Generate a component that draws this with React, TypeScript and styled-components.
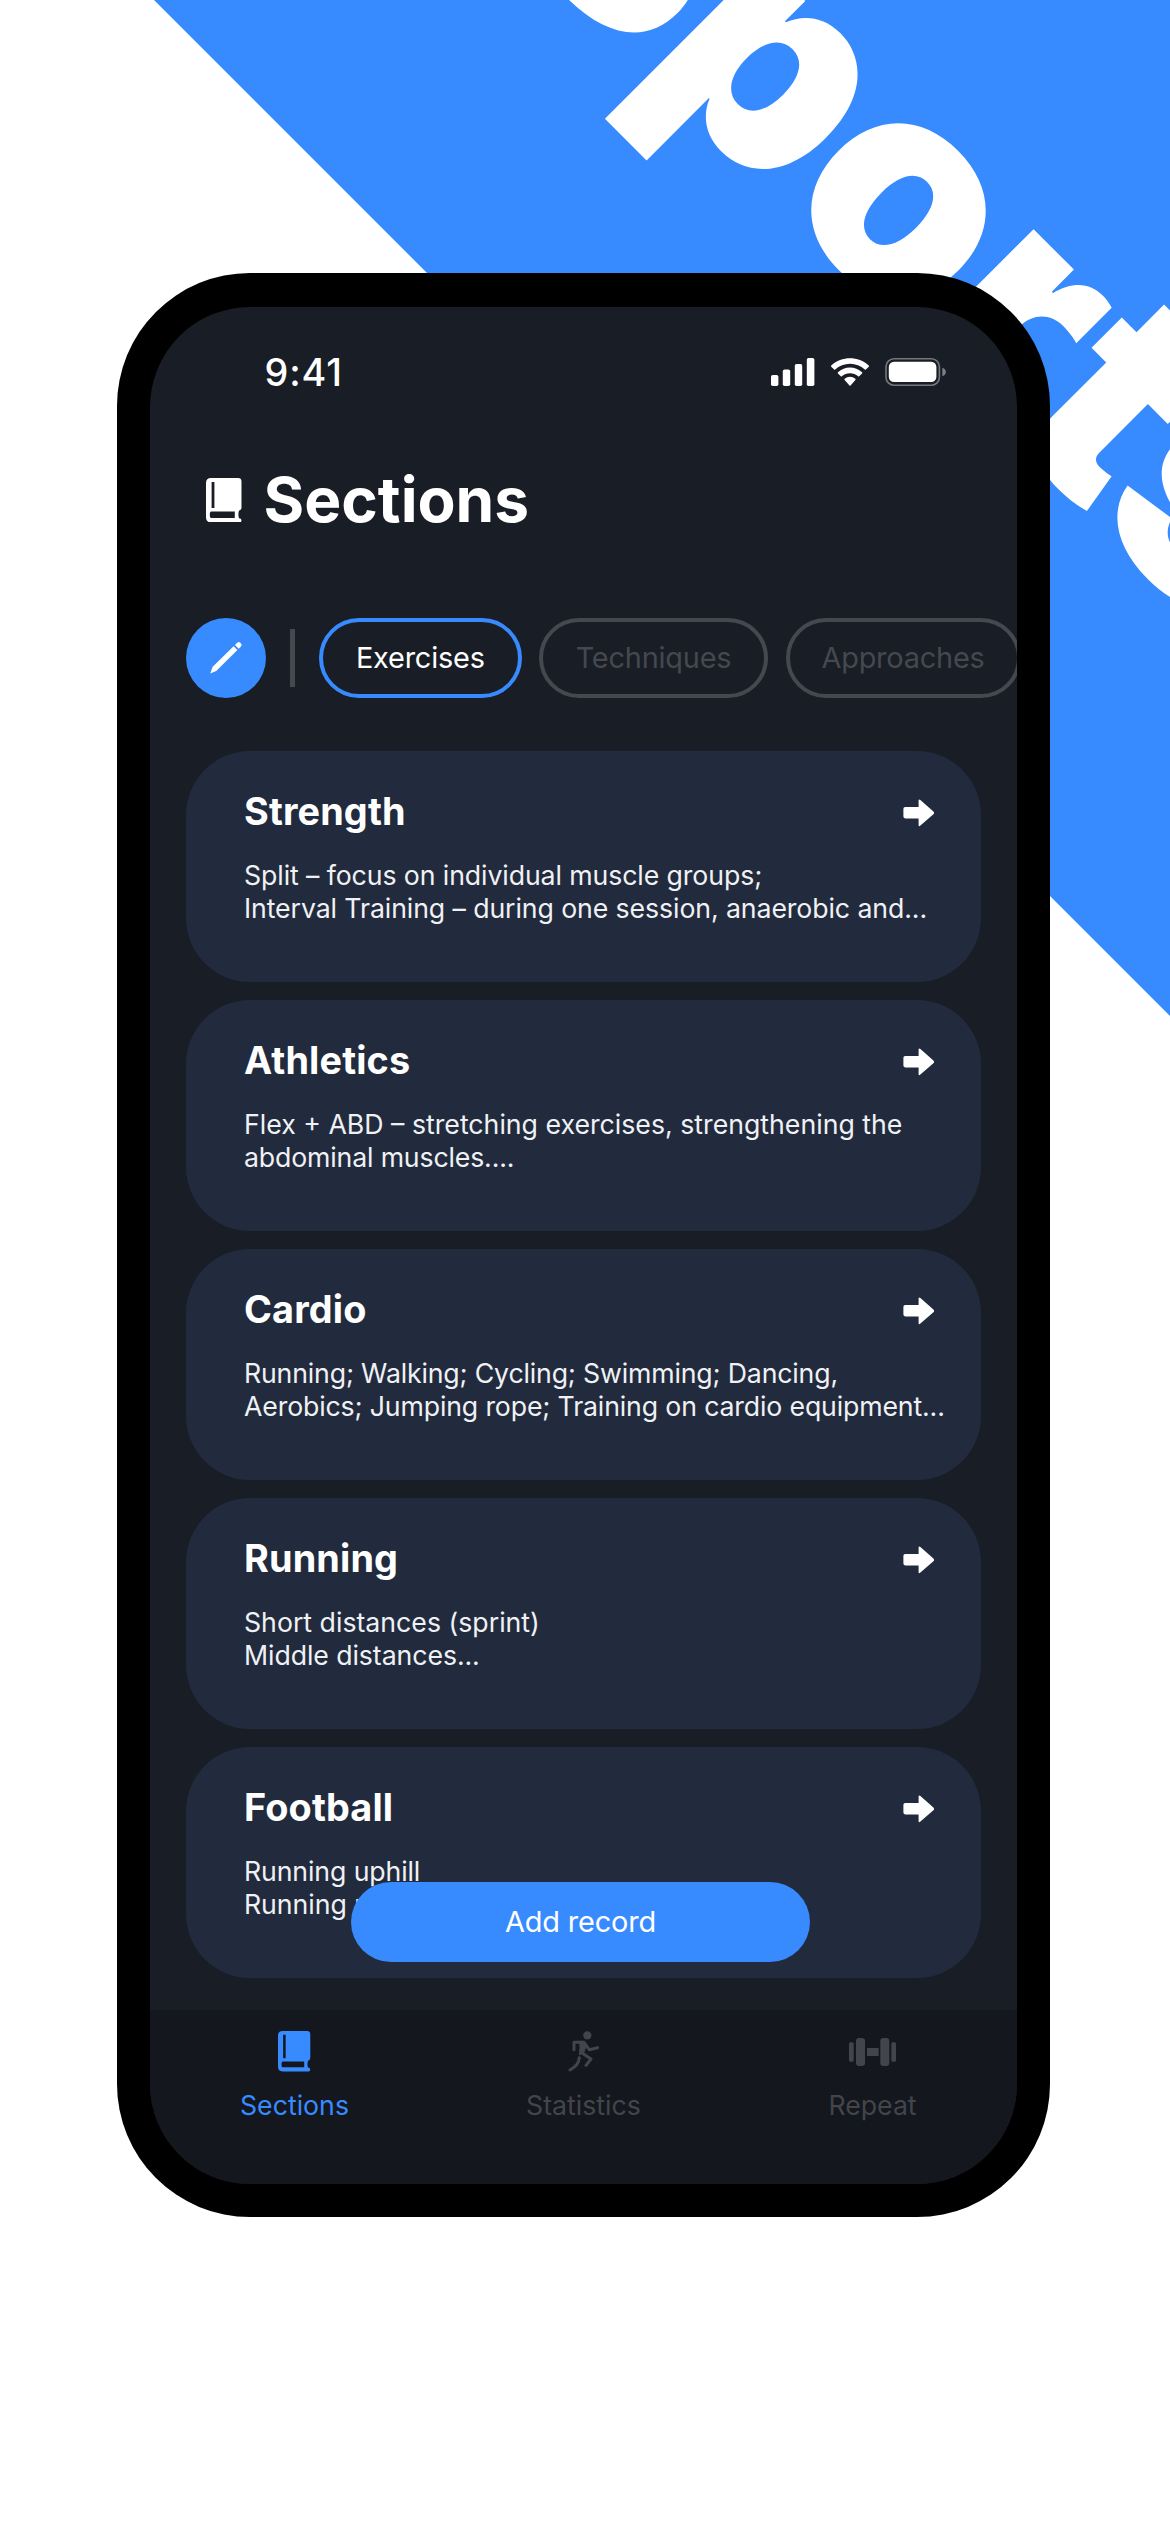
import React from "react";
import styled, { createGlobalStyle } from "styled-components";

const blue = "#388bff";
const muted = "#45484f";

const GlobalStyle = createGlobalStyle`
  * { box-sizing: border-box; margin: 0; }
  body { margin: 0; background: #fff; font-family: Inter, "Liberation Sans", sans-serif; }
  button { font: inherit; padding: 0; border: 0; background: none; color: inherit; }
`;

const Page = styled.main`
  position: relative;
  width: 1170px;
  height: 2532px;
  padding: 273px 120px 0 117px;
  overflow: hidden;
  background: #fff;
`;

const Banner = styled.div`
  position: absolute;
  inset: 0;
  background: ${blue};
  clip-path: polygon(154px 0, 100% 0, 100% 1016px);
`;

const BannerText = styled.span`
  position: absolute;
  left: 0;
  top: 0;
  font-size: 300px;
  line-height: 1;
  font-weight: 900;
  white-space: nowrap;
  color: #fff;
  transform-origin: 0 0;
  transform: rotate(45deg) translate(297px, -664px);
`;

const Phone = styled.section`
  position: relative;
  width: 933px;
  height: 1944px;
  padding: 33.5px 33px;
  border-radius: 133px;
  background: #000;
`;

const Screen = styled.div`
  position: relative;
  display: flex;
  flex-direction: column;
  width: 100%;
  height: 100%;
  border-radius: 100px;
  overflow: hidden;
  background: #191d25;
  color: #fff;
`;

const StatusBar = styled.div`
  display: flex;
  flex: none;
  align-items: center;
  justify-content: space-between;
  height: 130.5px;
  padding: 0 71px 0 114.5px;
`;

const Clock = styled.time`
  font-size: 37.8px;
  font-weight: 500;
  letter-spacing: 0.9px;
`;

const StatusIcons = styled.div`
  display: flex;
  align-items: center;
  gap: 16px;
`;

const Header = styled.header`
  display: flex;
  flex: none;
  align-items: center;
  gap: 22px;
  height: 125.5px;
  padding-left: 56px;
`;

const Title = styled.h1`
  font-size: 62.2px;
  line-height: 75px;
  font-weight: 700;
`;

const Chips = styled.div`
  display: flex;
  flex: none;
  align-items: center;
  gap: 17.7px;
  height: 80.3px;
  margin-top: 55px;
  padding-left: 36px;
`;

const EditButton = styled.button`
  display: grid;
  flex: none;
  place-items: center;
  width: 80.3px;
  height: 80.3px;
  border-radius: 50%;
  background: ${blue};
`;

const Divider = styled.span`
  flex: none;
  width: 5px;
  height: 58px;
  margin: 0 6.2px;
  background: ${muted};
`;

const Chip = styled.button<{ $width: number; $active?: boolean }>`
  flex: none;
  width: ${(p) => p.$width}px;
  height: 80.3px;
  border: 4.4px solid ${(p) => (p.$active ? blue : muted)};
  border-radius: 40.2px;
  font-size: 28.9px;
  letter-spacing: -0.2px;
  color: ${(p) => (p.$active ? "#fff" : muted)};
`;

const List = styled.div`
  display: flex;
  flex: 1;
  flex-direction: column;
  gap: 17.7px;
  min-height: 0;
  padding: 53.4px 36px 0;
`;

const Card = styled.article`
  flex: none;
  height: 231.3px;
  padding: 37px 46px 0 58px;
  border-radius: 64px;
  background: #212b3d;
`;

const CardHead = styled.div`
  display: flex;
  align-items: center;
  justify-content: space-between;
  height: 46px;

  svg {
    margin-top: 4px;
  }
`;

const CardTitle = styled.h2`
  font-size: 37.8px;
  line-height: 46px;
  font-weight: 700;
  letter-spacing: 0.15px;
`;

const CardText = styled.div`
  padding-top: 25px;
  font-size: 26.7px;
  line-height: 33.3px;
  color: #f0f1f4;
`;

const Line = styled.p<{ $tracking: number }>`
  white-space: nowrap;
  letter-spacing: ${(p) => p.$tracking}px;
`;

const AddButton = styled.button`
  position: absolute;
  left: 201px;
  bottom: 222px;
  width: 459px;
  height: 80px;
  border-radius: 40px;
  background: ${blue};
  font-size: 28.9px;
  letter-spacing: -0.15px;
  color: #fff;
`;

const TabBar = styled.nav`
  display: grid;
  flex: none;
  grid-template-columns: repeat(3, 1fr);
  height: 174px;
  background: #14171e;
`;

const Tab = styled.button<{ $active?: boolean }>`
  display: flex;
  flex-direction: column;
  align-items: center;
  padding-top: 17px;
  font-size: 26.7px;
  line-height: 34px;
  color: ${(p) => (p.$active ? blue : "#424549")};
`;

const TabIcon = styled.span`
  display: grid;
  place-items: center;
  height: 50px;
  margin-bottom: 11px;
`;

const Book = ({ width }: { width: number }) => (
  <svg width={width} height={width * 1.25} viewBox="0 0 35.5 44.4" fill="currentColor" fillRule="evenodd">
    <path d="M5 0H32Q35.5 0 35.5 3.5V29.5Q35.5 32 33 32.8Q31.8 36.5 33 40.2Q35.5 40.2 35.5 42.3Q35.5 44.4 33.5 44.4H5Q0 44.4 0 39V5Q0 0 5 0ZM7.2 4H5.6V30H8.4V4ZM5.2 33.6Q3.8 33.6 3.8 36.8Q3.8 40 5.2 40H28.8V33.6Z" />
  </svg>
);

const Arrow = () => (
  <svg width="32" height="28" viewBox="0 0 32 28" fill="#fff">
    <path d="M2.2 8H15.6V1.5Q15.6-.4 17.4 1L30.4 12.6Q31.8 14 30.4 15.3L17.4 26.6Q15.6 28 15.6 26V19.4H2.2Q.4 19.4.4 17.6V9.8Q.4 8 2.2 8Z" />
  </svg>
);

const Pencil = () => (
  <svg width="34" height="34" viewBox="0 0 34 34" fill="#fff">
    <path d="M1.3 32.4L3.5 26.1L24.6 5.2L28.4 9L7.2 29.9ZM25.9 3.9L28.3 1.7Q29.7.4 31.2 1.7L32 2.5Q33.4 4 32 5.4L29.7 7.7Z" />
  </svg>
);

const Runner = () => (
  <svg width="32" height="42" viewBox="0 0 96 126" fill="none" stroke="currentColor" strokeWidth="9" strokeLinejoin="round" strokeLinecap="round">
    <circle cx="58" cy="13" r="12.5" fill="currentColor" stroke="none" />
    <path d="M18 56V34H46" />
    <path d="M36 31H50L56 40L48 64L34 72L36 50Z" fill="currentColor" strokeWidth="3" />
    <path d="M52 40L64 56L89 50M42 66L69 84L54 103M34 80C32 98 24 106 6 117" />
  </svg>
);

const Dumbbell = () => (
  <svg width="47" height="28" viewBox="0 0 47 28" fill="currentColor">
    <rect x="0" y="4.3" width="4.7" height="19.4" rx="1.5" />
    <rect x="7" y="0" width="9" height="28" rx="3" />
    <rect x="18" y="10" width="11.6" height="8" rx=".6" />
    <rect x="31.3" y="0" width="9" height="28" rx="3" />
    <rect x="42.3" y="4.3" width="4.7" height="19.4" rx="1.5" />
  </svg>
);

const Signal = () => (
  <svg width="44" height="28" viewBox="0 0 44 28" fill="#fff">
    <rect x="0" y="17" width="7.4" height="11" rx="1.8" />
    <rect x="11.8" y="11.5" width="7.4" height="16.5" rx="1.8" />
    <rect x="23.8" y="6" width="7.4" height="22" rx="1.8" />
    <rect x="35.8" y="0" width="7.6" height="28" rx="1.8" />
  </svg>
);

const Wifi = () => (
  <svg width="38" height="28" viewBox="0 0 17.142 12.328" fill="#fff">
    <path d="M8.571 2.466C11.058 2.466 13.45 3.388 15.253 5.042C15.389 5.17 15.606 5.168 15.739 5.038L17.037 3.775C17.176 3.64 17.176 3.416 17.034 3.281C12.303-1.094 4.839-1.094.108 3.281C-.034 3.416-.036 3.64.105 3.775L1.403 5.038C1.536 5.168 1.753 5.17 1.889 5.042C3.692 3.388 6.084 2.466 8.571 2.466ZM8.568 6.687C9.925 6.686 11.234 7.198 12.24 8.122C12.376 8.253 12.591 8.251 12.723 8.116L14.011 6.796C14.15 6.65 14.148 6.417 14.005 6.277C10.942 3.392 6.197 3.392 3.133 6.277C2.99 6.417 2.988 6.65 3.128 6.796L4.415 8.116C4.548 8.251 4.762 8.253 4.898 8.122C5.904 7.199 7.212 6.687 8.568 6.687ZM11.092 9.48C11.094 9.585 11.057 9.687 10.99 9.761L8.813 12.216C8.68 12.366 8.463 12.366 8.33 12.216L6.153 9.761C6.012 9.606 6.017 9.351 6.164 9.204C7.554 7.971 9.589 7.971 10.979 9.204C11.049 9.275 11.091 9.375 11.092 9.48Z" />
  </svg>
);

const Battery = () => (
  <svg width="61" height="28" viewBox="0 0 61 28">
    <rect x="1" y=".8" width="53.4" height="26.4" rx="8" fill="none" stroke="#fff" strokeOpacity=".4" strokeWidth="1.6" />
    <rect x="3.8" y="3.7" width="47.6" height="20.4" rx="5.2" fill="#fff" />
    <path d="M57.4 9.8Q60.8 11.2 60.8 14T57.4 18.2Z" fill="#fff" fillOpacity=".45" />
  </svg>
);

interface TextLine {
  text: string;
  tracking: number;
}

const sections: { title: string; lines: TextLine[] }[] = [
  {
    title: "Strength",
    lines: [
      { text: "Split – focus on individual muscle groups;", tracking: -0.1 },
      { text: "Interval Training – during one session, anaerobic and...", tracking: -0.1 },
    ],
  },
  {
    title: "Athletics",
    lines: [
      { text: "Flex + ABD – stretching exercises, strengthening the", tracking: 0 },
      { text: "abdominal muscles....", tracking: -0.16 },
    ],
  },
  {
    title: "Cardio",
    lines: [
      { text: "Running; Walking; Cycling; Swimming; Dancing,", tracking: -0.17 },
      { text: "Aerobics; Jumping rope; Training on cardio equipment...", tracking: -0.15 },
    ],
  },
  {
    title: "Running",
    lines: [
      { text: "Short distances (sprint)", tracking: 0 },
      { text: "Middle distances...", tracking: -0.08 },
    ],
  },
  {
    title: "Football",
    lines: [
      { text: "Running uphill", tracking: -0.12 },
      { text: "Running up...", tracking: -0.05 },
    ],
  },
];

export default function App() {
  return (
    <Page>
      <GlobalStyle />
      <Banner>
        <BannerText>Sports</BannerText>
      </Banner>
      <Phone>
        <Screen>
          <StatusBar>
            <Clock>9:41</Clock>
            <StatusIcons>
              <Signal />
              <Wifi />
              <Battery />
            </StatusIcons>
          </StatusBar>
          <Header>
            <Book width={35.5} />
            <Title>Sections</Title>
          </Header>
          <Chips>
            <EditButton aria-label="Edit">
              <Pencil />
            </EditButton>
            <Divider />
            <Chip $width={202.5} $active>Exercises</Chip>
            <Chip $width={228.6}>Techniques</Chip>
            <Chip $width={235}>Approaches</Chip>
          </Chips>
          <List>
            {sections.map((s) => (
              <Card key={s.title}>
                <CardHead>
                  <CardTitle>{s.title}</CardTitle>
                  <Arrow />
                </CardHead>
                <CardText>
                  {s.lines.map((l) => (
                    <Line key={l.text} $tracking={l.tracking}>{l.text}</Line>
                  ))}
                </CardText>
              </Card>
            ))}
          </List>
          <TabBar>
            <Tab $active>
              <TabIcon>
                <Book width={32.3} />
              </TabIcon>
              Sections
            </Tab>
            <Tab>
              <TabIcon>
                <Runner />
              </TabIcon>
              Statistics
            </Tab>
            <Tab>
              <TabIcon>
                <Dumbbell />
              </TabIcon>
              Repeat
            </Tab>
          </TabBar>
          <AddButton>Add record</AddButton>
        </Screen>
      </Phone>
    </Page>
  );
}
